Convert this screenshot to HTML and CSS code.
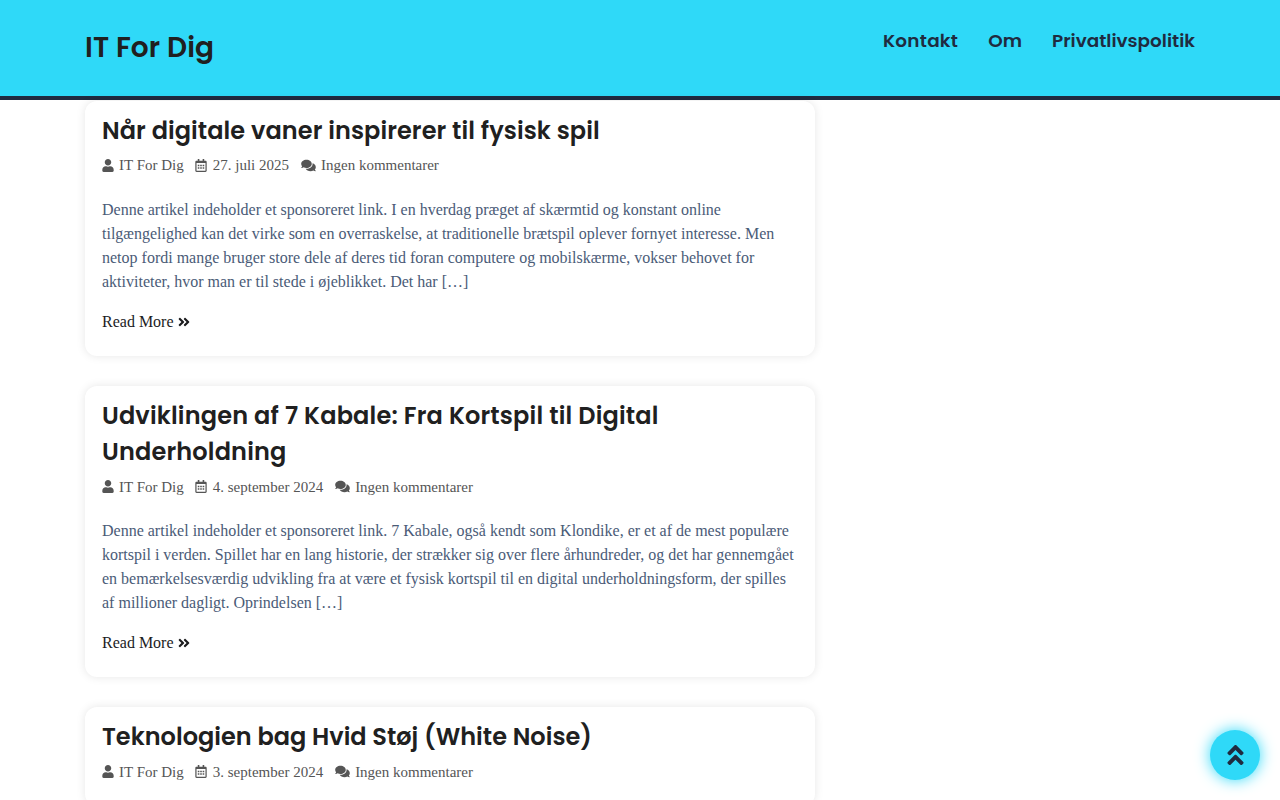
FILE: index.html
```html
<!DOCTYPE html>
<html lang="da">
<head>
<meta charset="utf-8">
<title>IT For Dig</title>
<link rel="stylesheet" href="styles.css">
</head>
<body>
<svg class="defs" width="0" height="0" aria-hidden="true">
  <symbol id="i-user" viewBox="0 0 448 512"><path d="M224 256c70.7 0 128-57.3 128-128S294.7 0 224 0 96 57.3 96 128s57.3 128 128 128zm89.6 32h-16.7c-22.2 10.2-46.9 16-72.9 16s-50.6-5.8-72.9-16h-16.7C60.2 288 0 348.2 0 422.4V464c0 26.5 21.5 48 48 48h352c26.5 0 48-21.5 48-48v-41.6c0-74.2-60.2-134.4-134.4-134.4z"/></symbol>
  <symbol id="i-cal" viewBox="0 0 448 512"><path d="M148 288h-40c-6.6 0-12-5.4-12-12v-40c0-6.6 5.4-12 12-12h40c6.6 0 12 5.4 12 12v40c0 6.6-5.4 12-12 12zm108-12v-40c0-6.6-5.4-12-12-12h-40c-6.6 0-12 5.4-12 12v40c0 6.6 5.4 12 12 12h40c6.6 0 12-5.4 12-12zm96 0v-40c0-6.6-5.4-12-12-12h-40c-6.6 0-12 5.4-12 12v40c0 6.6 5.4 12 12 12h40c6.6 0 12-5.4 12-12zm-96 96v-40c0-6.6-5.4-12-12-12h-40c-6.6 0-12 5.4-12 12v40c0 6.6 5.4 12 12 12h40c6.6 0 12-5.4 12-12zm-96 0v-40c0-6.6-5.4-12-12-12h-40c-6.6 0-12 5.4-12 12v40c0 6.6 5.4 12 12 12h40c6.6 0 12-5.4 12-12zm192 0v-40c0-6.6-5.4-12-12-12h-40c-6.6 0-12 5.4-12 12v40c0 6.6 5.4 12 12 12h40c6.6 0 12-5.4 12-12zm96-260v352c0 26.5-21.5 48-48 48H48c-26.5 0-48-21.5-48-48V112c0-26.5 21.5-48 48-48h48V12c0-6.6 5.4-12 12-12h40c6.6 0 12 5.4 12 12v52h128V12c0-6.6 5.4-12 12-12h40c6.6 0 12 5.4 12 12v52h48c26.5 0 48 21.5 48 48zm-48 346V160H48v298c0 3.3 2.7 6 6 6h340c3.3 0 6-2.7 6-6z"/></symbol>
  <symbol id="i-com" viewBox="0 0 576 512"><path d="M416 192c0-88.4-93.1-160-208-160S0 103.6 0 192c0 34.3 14.1 65.9 38 92-13.4 30.2-35.5 54.2-35.8 54.5-2.2 2.3-2.8 5.7-1.5 8.7S4.8 352 8 352c36.6 0 66.9-12.3 88.7-25 32.2 15.7 70.3 25 111.3 25 114.9 0 208-71.6 208-160zm122 220c23.9-26 38-57.7 38-92 0-66.9-53.5-124.2-129.3-148.1.9 6.6 1.3 13.3 1.3 20.1 0 105.9-107.7 192-240 192-10.8 0-21.3-.8-31.7-1.9C207.8 439.6 281.8 480 368 480c41 0 79.1-9.2 111.3-25 21.8 12.7 52.1 25 88.7 25 3.2 0 6.1-1.9 7.3-4.8 1.3-2.9.7-6.3-1.5-8.7-.3-.3-22.4-24.2-35.8-54.5z"/></symbol>
  <symbol id="i-right" viewBox="0 0 448 512"><path d="M224.3 273l-136 136c-9.4 9.4-24.6 9.4-33.9 0l-22.6-22.6c-9.4-9.4-9.4-24.6 0-33.9l96.4-96.4-96.4-96.4c-9.4-9.4-9.4-24.6 0-33.9L54.3 103c9.4-9.4 24.6-9.4 33.9 0l136 136c9.5 9.4 9.5 24.6.1 34zm192-34l-136-136c-9.4-9.4-24.6-9.4-33.9 0l-22.6 22.6c-9.4 9.4-9.4 24.6 0 33.9l96.4 96.4-96.4 96.4c-9.4 9.4-9.4 24.6 0 33.9l22.6 22.6c9.4 9.4 24.6 9.4 33.9 0l136-136c9.4-9.2 9.4-24.4 0-33.8z"/></symbol>
  <symbol id="i-up" viewBox="0 0 320 512"><path d="M177 255.7l136 136c9.4 9.4 9.4 24.6 0 33.9l-22.6 22.6c-9.4 9.4-24.6 9.4-33.9 0L160 351.9l-96.4 96.4c-9.4 9.4-24.6 9.4-33.9 0L7 425.7c-9.4-9.4-9.4-24.6 0-33.9l136-136c9.4-9.5 24.6-9.5 34-.1zm-34-192L7 199.7c-9.4 9.4-9.4 24.6 0 33.9l22.6 22.6c9.4 9.4 24.6 9.4 33.9 0l96.4-96.4 96.4 96.4c9.4 9.4 24.6 9.4 33.9 0l22.6-22.6c9.4-9.4 9.4-24.6 0-33.9l-136-136c-9.2-9.4-24.4-9.4-33.8 0z"/></symbol>
</svg>
<header class="site-header">
  <a class="site-title" href="#">IT For Dig</a>
  <nav class="site-nav">
    <a href="#">Kontakt</a>
    <a href="#">Om</a>
    <a href="#">Privatlivspolitik</a>
  </nav>
</header>
<main class="posts">
  <article class="card">
    <h2 class="post-title track-normal">Når digitale vaner inspirerer til fysisk spil</h2>
    <div class="meta">
      <span class="meta-item"><svg class="ic ic-user"><use href="#i-user"/></svg>IT For Dig</span>
      <span class="meta-item"><svg class="ic ic-cal"><use href="#i-cal"/></svg>27. juli 2025</span>
      <span class="meta-item"><svg class="ic ic-com"><use href="#i-com"/></svg>Ingen kommentarer</span>
    </div>
    <p class="excerpt">Denne artikel indeholder et sponsoreret link. I en hverdag præget af skærmtid og konstant online tilgængelighed kan det virke som en overraskelse, at traditionelle brætspil oplever fornyet interesse. Men netop fordi mange bruger store dele af deres tid foran computere og mobilskærme, vokser behovet for aktiviteter, hvor man er til stede i øjeblikket. Det har […]</p>
    <a class="more" href="#">Read More<svg class="ic-more"><use href="#i-right"/></svg></a>
  </article>
  <article class="card">
    <h2 class="post-title track-wide">Udviklingen af 7 Kabale: Fra Kortspil til Digital Underholdning</h2>
    <div class="meta">
      <span class="meta-item"><svg class="ic ic-user"><use href="#i-user"/></svg>IT For Dig</span>
      <span class="meta-item"><svg class="ic ic-cal"><use href="#i-cal"/></svg>4. september 2024</span>
      <span class="meta-item"><svg class="ic ic-com"><use href="#i-com"/></svg>Ingen kommentarer</span>
    </div>
    <p class="excerpt">Denne artikel indeholder et sponsoreret link. 7 Kabale, også kendt som Klondike, er et af de mest populære kortspil i verden. Spillet har en lang historie, der strækker sig over flere århundreder, og det har gennemgået en bemærkelsesværdig udvikling fra at være et fysisk kortspil til en digital underholdningsform, der spilles af millioner dagligt. Oprindelsen […]</p>
    <a class="more" href="#">Read More<svg class="ic-more"><use href="#i-right"/></svg></a>
  </article>
  <article class="card">
    <h2 class="post-title track-tight">Teknologien bag Hvid Støj (White Noise)</h2>
    <div class="meta">
      <span class="meta-item"><svg class="ic ic-user"><use href="#i-user"/></svg>IT For Dig</span>
      <span class="meta-item"><svg class="ic ic-cal"><use href="#i-cal"/></svg>3. september 2024</span>
      <span class="meta-item"><svg class="ic ic-com"><use href="#i-com"/></svg>Ingen kommentarer</span>
    </div>
  </article>
</main>
<a class="to-top" href="#" aria-label="Til toppen"><svg class="ic-up"><use href="#i-up"/></svg></a>
</body>
</html>
```
FILE: styles.css
```css
* { box-sizing: border-box; }
html, body { margin: 0; padding: 0; }
body {
  height: 800px;
  overflow: hidden;
  background: #fff;
  font-family: "Liberation Serif", "Times New Roman", serif;
  font-size: 16px;
  line-height: 24px;
  color: #4a5b77;
}
a { text-decoration: none; color: inherit; }
.defs { display: block; height: 0; }
.site-header {
  height: 100px;
  background: #2fd9f8;
  border-bottom: 4px solid #1f2b40;
  padding: 0 85px;
  display: flex;
  justify-content: space-between;
  align-items: flex-start;
}
.site-title {
  margin-top: 28px;
  font-family: Poppins, Inter, "Noto Sans", sans-serif;
  font-weight: 600;
  font-size: 28px;
  line-height: 40px;
  color: #202020;
  letter-spacing: 0.1px;
}
.site-nav {
  display: flex;
  gap: 30px;
  margin-top: 26px;
}
.site-nav a {
  font-family: Poppins, Inter, "Noto Sans", sans-serif;
  font-weight: 600;
  font-size: 18.4px;
  line-height: 30px;
  color: #1f2b40;
}
.site-nav a:first-child { letter-spacing: 0.25px; }
.posts {
  width: 730px;
  margin: 0.6px 0 0 85px;
  display: flex;
  flex-direction: column;
  gap: 30px;
}
.card {
  background: #fff;
  border-radius: 12px;
  box-shadow: 0 0 10px rgba(0, 0, 0, 0.1);
  padding: 12px 17px 21.9px;
}
.post-title {
  margin: 0;
  font-family: Poppins, Inter, "Noto Sans", sans-serif;
  font-weight: 600;
  font-size: 24px;
  line-height: 36px;
  color: #202020;
}
.track-normal { letter-spacing: 0.08px; }
.track-wide { letter-spacing: 0.18px; }
.track-tight { letter-spacing: 0.02px; }
.meta {
  display: flex;
  gap: 12px;
  margin-top: 4.8px;
  font-size: 15px;
  line-height: 24px;
  color: #555;
}
.meta-item { display: flex; align-items: center; }
.ic { fill: #555; height: 13px; margin-right: 5px; }
.ic-user { width: 12px; }
.ic-cal { width: 12px; margin-left: -1px; margin-right: 6px; }
.ic-com { width: 15px; }
.excerpt { margin: 20.6px 0 0; }
.more {
  display: flex;
  align-items: center;
  margin-top: 16px;
  color: #1c1c1e;
}
.ic-more { width: 12px; height: 14px; margin-left: 4px; fill: #1c1c1e; }
.to-top {
  position: fixed;
  right: 20px;
  bottom: 20px;
  width: 50px;
  height: 50px;
  border-radius: 50%;
  background: #2fd9f8;
  box-shadow: 0 0 15px #2fd9f8;
  display: flex;
  align-items: center;
  justify-content: center;
}
.ic-up { width: 17px; height: 26px; fill: #1f2b40; }
```
